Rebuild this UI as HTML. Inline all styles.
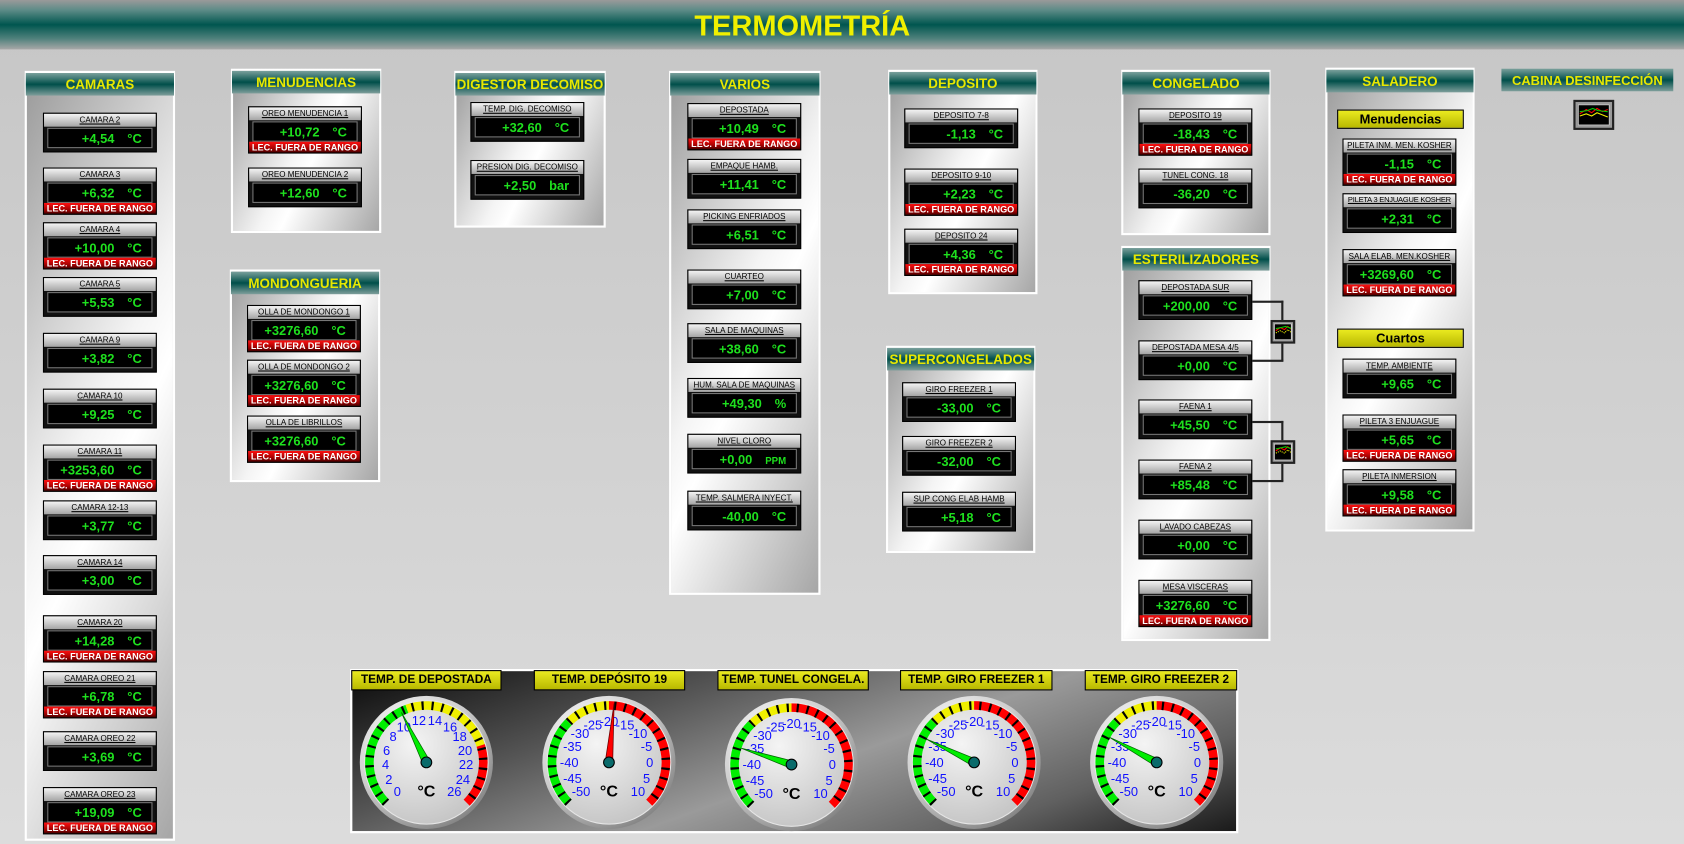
<!DOCTYPE html>
<html><head><meta charset="utf-8"><style>
*{margin:0;padding:0;box-sizing:border-box}
html,body{width:1684px;height:844px;overflow:hidden;background:#d0d0d0}
#s{position:absolute;left:0;top:0;width:1568px;height:786px;transform:scale(1.07398,1.07379);transform-origin:0 0;background:linear-gradient(#c6c6c6,#dcdcdc);font-family:"Liberation Sans",sans-serif}
#top{position:absolute;left:0;top:0;width:1568px;height:46px;background:linear-gradient(#9a9a9a 0%,#5e8c88 20%,#00564f 50%,#4f817c 78%,#a8a8a8 100%)}
#tt{position:absolute;left:547px;width:400px;top:0;text-align:center;color:#f0f000;font:bold 27px "Liberation Sans",sans-serif;line-height:48px}
.p{position:absolute;border:2px solid #fff;background:linear-gradient(115deg,#9a9a9a 0%,#f4f4f4 45%,#fff 55%,#a6a6a6 100%)}
.h{height:21px;background:linear-gradient(#7aa09c 0%,#004f4a 50%,#7e9e9b 100%);color:#e8e800;font:bold 12.5px "Liberation Sans",sans-serif;text-align:center;line-height:22px;margin:0 -1px;white-space:nowrap;overflow:hidden}
.ind{position:absolute;width:106px;border:1px solid #000;background:#111}
.lb{height:12px;background:linear-gradient(#f4f4f4,#a4a4a4);font:7.5px "Liberation Sans",sans-serif;text-align:center;line-height:12px;color:#000;text-decoration:underline;white-space:nowrap;overflow:hidden}
.dv{height:19px;margin:1px 3px 3px;border:1px solid #777;background:#000;color:#1ee01e;font:bold 12px "Liberation Sans",sans-serif;text-align:right;padding-right:9px;line-height:18px;white-space:nowrap}
.dv span{margin-left:12px}
.a .dv{margin-bottom:0}
.al{height:10px;background:linear-gradient(#ff1010,#900 70%,#400);color:#fff;font:bold 8.5px "Liberation Sans",sans-serif;text-align:center;line-height:10px;white-space:nowrap}
.yb{position:absolute;height:18px;background:linear-gradient(#eaea20,#b8b800);border:1px solid #000;font:bold 12px "Liberation Sans",sans-serif;text-align:center;line-height:17px;color:#000;white-space:nowrap;overflow:hidden}
.gh{font-size:11px}
.ic{position:absolute;border:2px solid #222;background:#9a9a9a;padding:2px}
.ic div{width:100%;height:100%;background:#000;border:1px solid #ccc;overflow:hidden}
.ln{position:absolute;background:#222}
.g{position:absolute;width:130px;height:130px}
.gt{font:12px "Liberation Sans",sans-serif;fill:#1010ff;text-anchor:middle;dominant-baseline:central}
</style></head><body><div id="s">
<div id="top"><div id="tt">TERMOMETRÍA</div></div>

<!-- CAMARAS -->
<div class="p" style="left:23px;top:66px;width:140px;height:717px"><div class="h">CAMARAS</div></div>
<div class="ind" style="left:40px;top:105px"><div class="lb">CAMARA 2</div><div class="dv">+4,54<span>°C</span></div></div>
<div class="ind a" style="left:40px;top:156px"><div class="lb">CAMARA 3</div><div class="dv">+6,32<span>°C</span></div><div class="al">LEC. FUERA DE RANGO</div></div>
<div class="ind a" style="left:40px;top:207px"><div class="lb">CAMARA 4</div><div class="dv">+10,00<span>°C</span></div><div class="al">LEC. FUERA DE RANGO</div></div>
<div class="ind" style="left:40px;top:258px"><div class="lb">CAMARA 5</div><div class="dv">+5,53<span>°C</span></div></div>
<div class="ind" style="left:40px;top:310px"><div class="lb">CAMARA 9</div><div class="dv">+3,82<span>°C</span></div></div>
<div class="ind" style="left:40px;top:362px"><div class="lb">CAMARA 10</div><div class="dv">+9,25<span>°C</span></div></div>
<div class="ind a" style="left:40px;top:414px"><div class="lb">CAMARA 11</div><div class="dv">+3253,60<span>°C</span></div><div class="al">LEC. FUERA DE RANGO</div></div>
<div class="ind" style="left:40px;top:466px"><div class="lb">CAMARA 12-13</div><div class="dv">+3,77<span>°C</span></div></div>
<div class="ind" style="left:40px;top:517px"><div class="lb">CAMARA 14</div><div class="dv">+3,00<span>°C</span></div></div>
<div class="ind a" style="left:40px;top:573px"><div class="lb">CAMARA 20</div><div class="dv">+14,28<span>°C</span></div><div class="al">LEC. FUERA DE RANGO</div></div>
<div class="ind a" style="left:40px;top:625px"><div class="lb">CAMARA OREO 21</div><div class="dv">+6,78<span>°C</span></div><div class="al">LEC. FUERA DE RANGO</div></div>
<div class="ind" style="left:40px;top:681px"><div class="lb">CAMARA OREO 22</div><div class="dv">+3,69<span>°C</span></div></div>
<div class="ind a" style="left:40px;top:733px"><div class="lb">CAMARA OREO 23</div><div class="dv">+19,09<span>°C</span></div><div class="al">LEC. FUERA DE RANGO</div></div>

<!-- MENUDENCIAS -->
<div class="p" style="left:215px;top:64px;width:140px;height:153px"><div class="h">MENUDENCIAS</div></div>
<div class="ind a" style="left:231px;top:99px"><div class="lb">OREO MENUDENCIA 1</div><div class="dv">+10,72<span>°C</span></div><div class="al">LEC. FUERA DE RANGO</div></div>
<div class="ind" style="left:231px;top:156px"><div class="lb">OREO MENUDENCIA 2</div><div class="dv">+12,60<span>°C</span></div></div>

<!-- MONDONGUERIA -->
<div class="p" style="left:214px;top:251px;width:140px;height:198px"><div class="h">MONDONGUERIA</div></div>
<div class="ind a" style="left:230px;top:284px"><div class="lb">OLLA DE MONDONGO 1</div><div class="dv">+3276,60<span>°C</span></div><div class="al">LEC. FUERA DE RANGO</div></div>
<div class="ind a" style="left:230px;top:335px"><div class="lb">OLLA DE MONDONGO 2</div><div class="dv">+3276,60<span>°C</span></div><div class="al">LEC. FUERA DE RANGO</div></div>
<div class="ind a" style="left:230px;top:387px"><div class="lb">OLLA DE LIBRILLOS</div><div class="dv">+3276,60<span>°C</span></div><div class="al">LEC. FUERA DE RANGO</div></div>

<!-- DIGESTOR -->
<div class="p" style="left:423px;top:66px;width:141px;height:146px"><div class="h">DIGESTOR DECOMISO</div></div>
<div class="ind" style="left:438px;top:95px"><div class="lb">TEMP. DIG. DECOMISO</div><div class="dv">+32,60<span>°C</span></div></div>
<div class="ind" style="left:438px;top:149px"><div class="lb">PRESION  DIG. DECOMISO</div><div class="dv">+2,50<span>bar</span></div></div>

<!-- VARIOS -->
<div class="p" style="left:623px;top:66px;width:141px;height:488px"><div class="h">VARIOS</div></div>
<div class="ind a" style="left:640px;top:96px"><div class="lb">DEPOSTADA</div><div class="dv">+10,49<span>°C</span></div><div class="al">LEC. FUERA DE RANGO</div></div>
<div class="ind" style="left:640px;top:148px"><div class="lb">EMPAQUE HAMB.</div><div class="dv">+11,41<span>°C</span></div></div>
<div class="ind" style="left:640px;top:195px"><div class="lb">PICKING ENFRIADOS</div><div class="dv">+6,51<span>°C</span></div></div>
<div class="ind" style="left:640px;top:251px"><div class="lb">CUARTEO</div><div class="dv">+7,00<span>°C</span></div></div>
<div class="ind" style="left:640px;top:301px"><div class="lb">SALA DE MAQUINAS</div><div class="dv">+38,60<span>°C</span></div></div>
<div class="ind" style="left:640px;top:352px"><div class="lb">HUM. SALA DE MAQUINAS</div><div class="dv">+49,30<span>%</span></div></div>
<div class="ind" style="left:640px;top:404px"><div class="lb">NIVEL CLORO</div><div class="dv">+0,00<span style="font-size:9px">PPM</span></div></div>
<div class="ind" style="left:640px;top:457px"><div class="lb">TEMP. SALMERA INYECT.</div><div class="dv">-40,00<span>°C</span></div></div>

<!-- DEPOSITO -->
<div class="p" style="left:827px;top:65px;width:139px;height:209px"><div class="h">DEPOSITO</div></div>
<div class="ind" style="left:842px;top:101px"><div class="lb">DEPOSITO 7-8</div><div class="dv">-1,13<span>°C</span></div></div>
<div class="ind a" style="left:842px;top:157px"><div class="lb">DEPOSITO 9-10</div><div class="dv">+2,23<span>°C</span></div><div class="al">LEC. FUERA DE RANGO</div></div>
<div class="ind a" style="left:842px;top:213px"><div class="lb">DEPOSITO 24</div><div class="dv">+4,36<span>°C</span></div><div class="al">LEC. FUERA DE RANGO</div></div>

<!-- SUPERCONGELADOS -->
<div class="p" style="left:825px;top:322px;width:139px;height:193px"><div class="h">SUPERCONGELADOS</div></div>
<div class="ind" style="left:840px;top:356px"><div class="lb">GIRO FREEZER 1</div><div class="dv">-33,00<span>°C</span></div></div>
<div class="ind" style="left:840px;top:406px"><div class="lb">GIRO FREEZER 2</div><div class="dv">-32,00<span>°C</span></div></div>
<div class="ind" style="left:840px;top:458px"><div class="lb">SUP CONG ELAB HAMB</div><div class="dv">+5,18<span>°C</span></div></div>

<!-- CONGELADO -->
<div class="p" style="left:1044px;top:65px;width:139px;height:154px"><div class="h">CONGELADO</div></div>
<div class="ind a" style="left:1060px;top:101px"><div class="lb">DEPOSITO 19</div><div class="dv">-18,43<span>°C</span></div><div class="al">LEC. FUERA DE RANGO</div></div>
<div class="ind" style="left:1060px;top:157px"><div class="lb">TUNEL CONG. 18</div><div class="dv">-36,20<span>°C</span></div></div>

<!-- ESTERILIZADORES -->
<div class="p" style="left:1044px;top:229px;width:139px;height:368px"><div class="h">ESTERILIZADORES</div></div>
<div class="ind" style="left:1060px;top:261px"><div class="lb">DEPOSTADA  SUR</div><div class="dv">+200,00<span>°C</span></div></div>
<div class="ind" style="left:1060px;top:317px"><div class="lb">DEPOSTADA  MESA  4/5</div><div class="dv">+0,00<span>°C</span></div></div>
<div class="ind" style="left:1060px;top:372px"><div class="lb">FAENA 1</div><div class="dv">+45,50<span>°C</span></div></div>
<div class="ind" style="left:1060px;top:428px"><div class="lb">FAENA 2</div><div class="dv">+85,48<span>°C</span></div></div>
<div class="ind" style="left:1060px;top:484px"><div class="lb">LAVADO CABEZAS</div><div class="dv">+0,00<span>°C</span></div></div>
<div class="ind a" style="left:1060px;top:540px"><div class="lb">MESA VISCERAS</div><div class="dv">+3276,60<span>°C</span></div><div class="al">LEC. FUERA DE RANGO</div></div>
<div class="ln" style="left:1166px;top:280px;width:29px;height:2px"></div>
<div class="ln" style="left:1193px;top:280px;width:2px;height:56px"></div>
<div class="ln" style="left:1166px;top:335px;width:29px;height:2px"></div>
<div class="ln" style="left:1166px;top:392px;width:29px;height:2px"></div>
<div class="ln" style="left:1193px;top:392px;width:2px;height:56px"></div>
<div class="ln" style="left:1166px;top:447px;width:29px;height:2px"></div>
<div class="ic" style="left:1183px;top:298px;width:23px;height:22px;padding:1px"><div><svg width="17" height="14" viewBox="0 0 17 14"><polyline points="1,6 5,3 9,5 12,2 16,5" fill="none" stroke="#f00"/><polyline points="1,8 5,6 9,8 12,5 16,8" fill="none" stroke="#ee0" stroke-dasharray="1 1"/><polyline points="1,4 6,3 10,2 16,4" fill="none" stroke="#0c0"/></svg></div></div>
<div class="ic" style="left:1183px;top:410px;width:23px;height:22px;padding:1px"><div><svg width="17" height="14" viewBox="0 0 17 14"><polyline points="1,6 5,3 9,5 12,2 16,5" fill="none" stroke="#f00"/><polyline points="1,8 5,6 9,8 12,5 16,8" fill="none" stroke="#ee0" stroke-dasharray="1 1"/><polyline points="1,4 6,3 10,2 16,4" fill="none" stroke="#0c0"/></svg></div></div>

<!-- SALADERO -->
<div class="p" style="left:1234px;top:63px;width:139px;height:432px"><div class="h">SALADERO</div></div>
<div class="yb" style="left:1245px;top:102px;width:118px">Menudencias</div>
<div class="ind a" style="left:1250px;top:129px"><div class="lb">PILETA INM. MEN. KOSHER</div><div class="dv">-1,15<span>°C</span></div><div class="al">LEC. FUERA DE RANGO</div></div>
<div class="ind" style="left:1250px;top:180px"><div class="lb" style="font-size:7px;letter-spacing:-0.2px">PILETA 3 ENJUAGUE KOSHER</div><div class="dv">+2,31<span>°C</span></div></div>
<div class="ind a" style="left:1250px;top:232px"><div class="lb">SALA ELAB. MEN.KOSHER</div><div class="dv">+3269,60<span>°C</span></div><div class="al">LEC. FUERA DE RANGO</div></div>
<div class="yb" style="left:1245px;top:306px;width:118px">Cuartos</div>
<div class="ind" style="left:1250px;top:334px"><div class="lb">TEMP. AMBIENTE</div><div class="dv">+9,65<span>°C</span></div></div>
<div class="ind a" style="left:1250px;top:386px"><div class="lb">PILETA 3 ENJUAGUE</div><div class="dv">+5,65<span>°C</span></div><div class="al">LEC. FUERA DE RANGO</div></div>
<div class="ind a" style="left:1250px;top:437px"><div class="lb">PILETA INMERSION</div><div class="dv">+9,58<span>°C</span></div><div class="al">LEC. FUERA DE RANGO</div></div>

<!-- CABINA -->
<div class="h" style="position:absolute;left:1398px;top:64px;width:160px;height:21px;margin:0;font-size:12px">CABINA DESINFECCIÓN</div>
<div class="ic" style="left:1465px;top:93px;width:38px;height:28px"><div><svg width="28" height="18" viewBox="0 0 28 18"><polyline points="1,8 7,4 12,7 17,3 22,6 27,4" fill="none" stroke="#f00" stroke-width="1"/><polyline points="1,10 7,8 12,10 17,7 22,9 27,11" fill="none" stroke="#ee0" stroke-width="1"/><polyline points="1,6 8,5 13,3 18,5 27,6" fill="none" stroke="#0c0" stroke-width="1"/></svg></div></div>

<!-- GAUGES -->
<div style="position:absolute;left:326px;top:623px;width:827px;height:153px;border:2px solid #fff;background:linear-gradient(160deg,#0a0a0a 0%,#555 30%,#9a9a9a 55%,#606060 80%,#1a1a1a 100%)"></div>
<div class="yb gh" style="left:327px;top:624px;width:140px;height:19px">TEMP. DE DEPOSTADA</div>
<div class="yb gh" style="left:497px;top:624px;width:141px;height:19px">TEMP. DEPÓSITO 19</div>
<div class="yb gh" style="left:668px;top:624px;width:141px;height:19px">TEMP. TUNEL CONGELA.</div>
<div class="yb gh" style="left:838px;top:624px;width:142px;height:19px">TEMP. GIRO FREEZER 1</div>
<div class="yb gh" style="left:1010px;top:624px;width:142px;height:19px">TEMP. GIRO FREEZER 2</div>

<svg width="0" height="0" style="position:absolute"><defs>
<radialGradient id="rim" cx="0.35" cy="0.3" r="0.8"><stop offset="0" stop-color="#fff"/><stop offset="0.6" stop-color="#ccc"/><stop offset="1" stop-color="#777"/></radialGradient>
<radialGradient id="face" cx="0.4" cy="0.35" r="0.7"><stop offset="0" stop-color="#f4f4f4"/><stop offset="1" stop-color="#c4c4c4"/></radialGradient>
</defs></svg>

<svg class="g" style="left:332px;top:645px" viewBox="-65 -65 130 130">
<circle r="62" fill="url(#rim)"/><circle r="58" fill="#e6e6e6"/><circle r="57" fill="url(#face)"/>
<path d="M -37.5 37.5 A 53 53 0 0 1 -18.1 -49.8" fill="none" stroke="#00ee00" stroke-width="8"/>
<path d="M -18.1 -49.8 A 53 53 0 0 1 50.6 -15.8" fill="none" stroke="#f0f000" stroke-width="8"/>
<path d="M 50.6 -15.8 A 53 53 0 0 1 37.5 37.5" fill="none" stroke="#ff0000" stroke-width="8"/>
<path d="M -37.5 37.5 A 53 53 0 1 1 37.5 37.5" fill="none" stroke="#000" stroke-width="8" stroke-dasharray="2 7.25"/>
<g><text x="-27" y="27" class="gt">0</text><text x="-35" y="16" class="gt">2</text><text x="-38" y="2" class="gt">4</text><text x="-37" y="-11" class="gt">6</text><text x="-31" y="-24" class="gt">8</text><text x="-21" y="-33" class="gt">10</text><text x="-7" y="-39" class="gt">12</text><text x="8" y="-39" class="gt">14</text><text x="22" y="-33" class="gt">16</text><text x="31" y="-24" class="gt">18</text><text x="36" y="-11" class="gt">20</text><text x="37" y="2" class="gt">22</text><text x="34" y="16" class="gt">24</text><text x="26" y="27" class="gt">26</text></g>
<text x="0" y="32" font-family="Liberation Sans" font-weight="bold" font-size="15" text-anchor="middle">°C</text>
<g transform="rotate(-26.5)"><polygon points="-3.5,0 0,-52 3.5,0" fill="#00ee00" stroke="#060" stroke-width="0.7"/></g>
<circle r="5" fill="#0a6b6b" stroke="#000"/>
</svg>

<svg class="g" style="left:502px;top:645px" viewBox="-65 -65 130 130">
<circle r="62" fill="url(#rim)"/><circle r="58" fill="#e6e6e6"/><circle r="57" fill="url(#face)"/>
<path d="M -37.5 37.5 A 53 53 0 0 1 -37.5 -37.5" fill="none" stroke="#00ee00" stroke-width="8"/>
<path d="M -37.5 -37.5 A 53 53 0 0 1 0 -53" fill="none" stroke="#f0f000" stroke-width="8"/>
<path d="M 0 -53 A 53 53 0 0 1 37.5 37.5" fill="none" stroke="#ff0000" stroke-width="8"/>
<path d="M -37.5 37.5 A 53 53 0 1 1 37.5 37.5" fill="none" stroke="#000" stroke-width="8" stroke-dasharray="2 7.25"/>
<g><text x="-26" y="27" class="gt">-50</text><text x="-34" y="15" class="gt">-45</text><text x="-37" y="0" class="gt">-40</text><text x="-34" y="-15" class="gt">-35</text><text x="-27" y="-27" class="gt">-30</text><text x="-15" y="-35" class="gt">-25</text><text x="0" y="-38" class="gt">-20</text><text x="15" y="-35" class="gt">-15</text><text x="27" y="-27" class="gt">-10</text><text x="35" y="-15" class="gt">-5</text><text x="38" y="0" class="gt">0</text><text x="35" y="15" class="gt">5</text><text x="27" y="27" class="gt">10</text></g>
<text x="0" y="32" font-family="Liberation Sans" font-weight="bold" font-size="15" text-anchor="middle">°C</text>
<g transform="rotate(5)"><polygon points="-3.5,0 0,-55 3.5,0" fill="#ff0000" stroke="#600" stroke-width="0.7"/></g>
<circle r="5" fill="#0a6b6b" stroke="#000"/>
</svg>

<svg class="g" style="left:672px;top:647px" viewBox="-65 -65 130 130">
<circle r="62" fill="url(#rim)"/><circle r="58" fill="#e6e6e6"/><circle r="57" fill="url(#face)"/>
<path d="M -37.5 37.5 A 53 53 0 0 1 -37.5 -37.5" fill="none" stroke="#00ee00" stroke-width="8"/>
<path d="M -37.5 -37.5 A 53 53 0 0 1 0 -53" fill="none" stroke="#f0f000" stroke-width="8"/>
<path d="M 0 -53 A 53 53 0 0 1 37.5 37.5" fill="none" stroke="#ff0000" stroke-width="8"/>
<path d="M -37.5 37.5 A 53 53 0 1 1 37.5 37.5" fill="none" stroke="#000" stroke-width="8" stroke-dasharray="2 7.25"/>
<g><text x="-26" y="27" class="gt">-50</text><text x="-34" y="15" class="gt">-45</text><text x="-37" y="0" class="gt">-40</text><text x="-34" y="-15" class="gt">-35</text><text x="-27" y="-27" class="gt">-30</text><text x="-15" y="-35" class="gt">-25</text><text x="0" y="-38" class="gt">-20</text><text x="15" y="-35" class="gt">-15</text><text x="27" y="-27" class="gt">-10</text><text x="35" y="-15" class="gt">-5</text><text x="38" y="0" class="gt">0</text><text x="35" y="15" class="gt">5</text><text x="27" y="27" class="gt">10</text></g>
<text x="0" y="32" font-family="Liberation Sans" font-weight="bold" font-size="15" text-anchor="middle">°C</text>
<g transform="rotate(-72)"><polygon points="-3.5,0 0,-50 3.5,0" fill="#00ee00" stroke="#060" stroke-width="0.7"/></g>
<circle r="5" fill="#0a6b6b" stroke="#000"/>
</svg>

<svg class="g" style="left:842px;top:645px" viewBox="-65 -65 130 130">
<circle r="62" fill="url(#rim)"/><circle r="58" fill="#e6e6e6"/><circle r="57" fill="url(#face)"/>
<path d="M -37.5 37.5 A 53 53 0 0 1 -37.5 -37.5" fill="none" stroke="#00ee00" stroke-width="8"/>
<path d="M -37.5 -37.5 A 53 53 0 0 1 0 -53" fill="none" stroke="#f0f000" stroke-width="8"/>
<path d="M 0 -53 A 53 53 0 0 1 37.5 37.5" fill="none" stroke="#ff0000" stroke-width="8"/>
<path d="M -37.5 37.5 A 53 53 0 1 1 37.5 37.5" fill="none" stroke="#000" stroke-width="8" stroke-dasharray="2 7.25"/>
<g><text x="-26" y="27" class="gt">-50</text><text x="-34" y="15" class="gt">-45</text><text x="-37" y="0" class="gt">-40</text><text x="-34" y="-15" class="gt">-35</text><text x="-27" y="-27" class="gt">-30</text><text x="-15" y="-35" class="gt">-25</text><text x="0" y="-38" class="gt">-20</text><text x="15" y="-35" class="gt">-15</text><text x="27" y="-27" class="gt">-10</text><text x="35" y="-15" class="gt">-5</text><text x="38" y="0" class="gt">0</text><text x="35" y="15" class="gt">5</text><text x="27" y="27" class="gt">10</text></g>
<text x="0" y="32" font-family="Liberation Sans" font-weight="bold" font-size="15" text-anchor="middle">°C</text>
<g transform="rotate(-64)"><polygon points="-3.5,0 0,-50 3.5,0" fill="#00ee00" stroke="#060" stroke-width="0.7"/></g>
<circle r="5" fill="#0a6b6b" stroke="#000"/>
</svg>

<svg class="g" style="left:1012px;top:645px" viewBox="-65 -65 130 130">
<circle r="62" fill="url(#rim)"/><circle r="58" fill="#e6e6e6"/><circle r="57" fill="url(#face)"/>
<path d="M -37.5 37.5 A 53 53 0 0 1 -37.5 -37.5" fill="none" stroke="#00ee00" stroke-width="8"/>
<path d="M -37.5 -37.5 A 53 53 0 0 1 0 -53" fill="none" stroke="#f0f000" stroke-width="8"/>
<path d="M 0 -53 A 53 53 0 0 1 37.5 37.5" fill="none" stroke="#ff0000" stroke-width="8"/>
<path d="M -37.5 37.5 A 53 53 0 1 1 37.5 37.5" fill="none" stroke="#000" stroke-width="8" stroke-dasharray="2 7.25"/>
<g><text x="-26" y="27" class="gt">-50</text><text x="-34" y="15" class="gt">-45</text><text x="-37" y="0" class="gt">-40</text><text x="-34" y="-15" class="gt">-35</text><text x="-27" y="-27" class="gt">-30</text><text x="-15" y="-35" class="gt">-25</text><text x="0" y="-38" class="gt">-20</text><text x="15" y="-35" class="gt">-15</text><text x="27" y="-27" class="gt">-10</text><text x="35" y="-15" class="gt">-5</text><text x="38" y="0" class="gt">0</text><text x="35" y="15" class="gt">5</text><text x="27" y="27" class="gt">10</text></g>
<text x="0" y="32" font-family="Liberation Sans" font-weight="bold" font-size="15" text-anchor="middle">°C</text>
<g transform="rotate(-62)"><polygon points="-3.5,0 0,-50 3.5,0" fill="#00ee00" stroke="#060" stroke-width="0.7"/></g>
<circle r="5" fill="#0a6b6b" stroke="#000"/>
</svg>

</div></body></html>
